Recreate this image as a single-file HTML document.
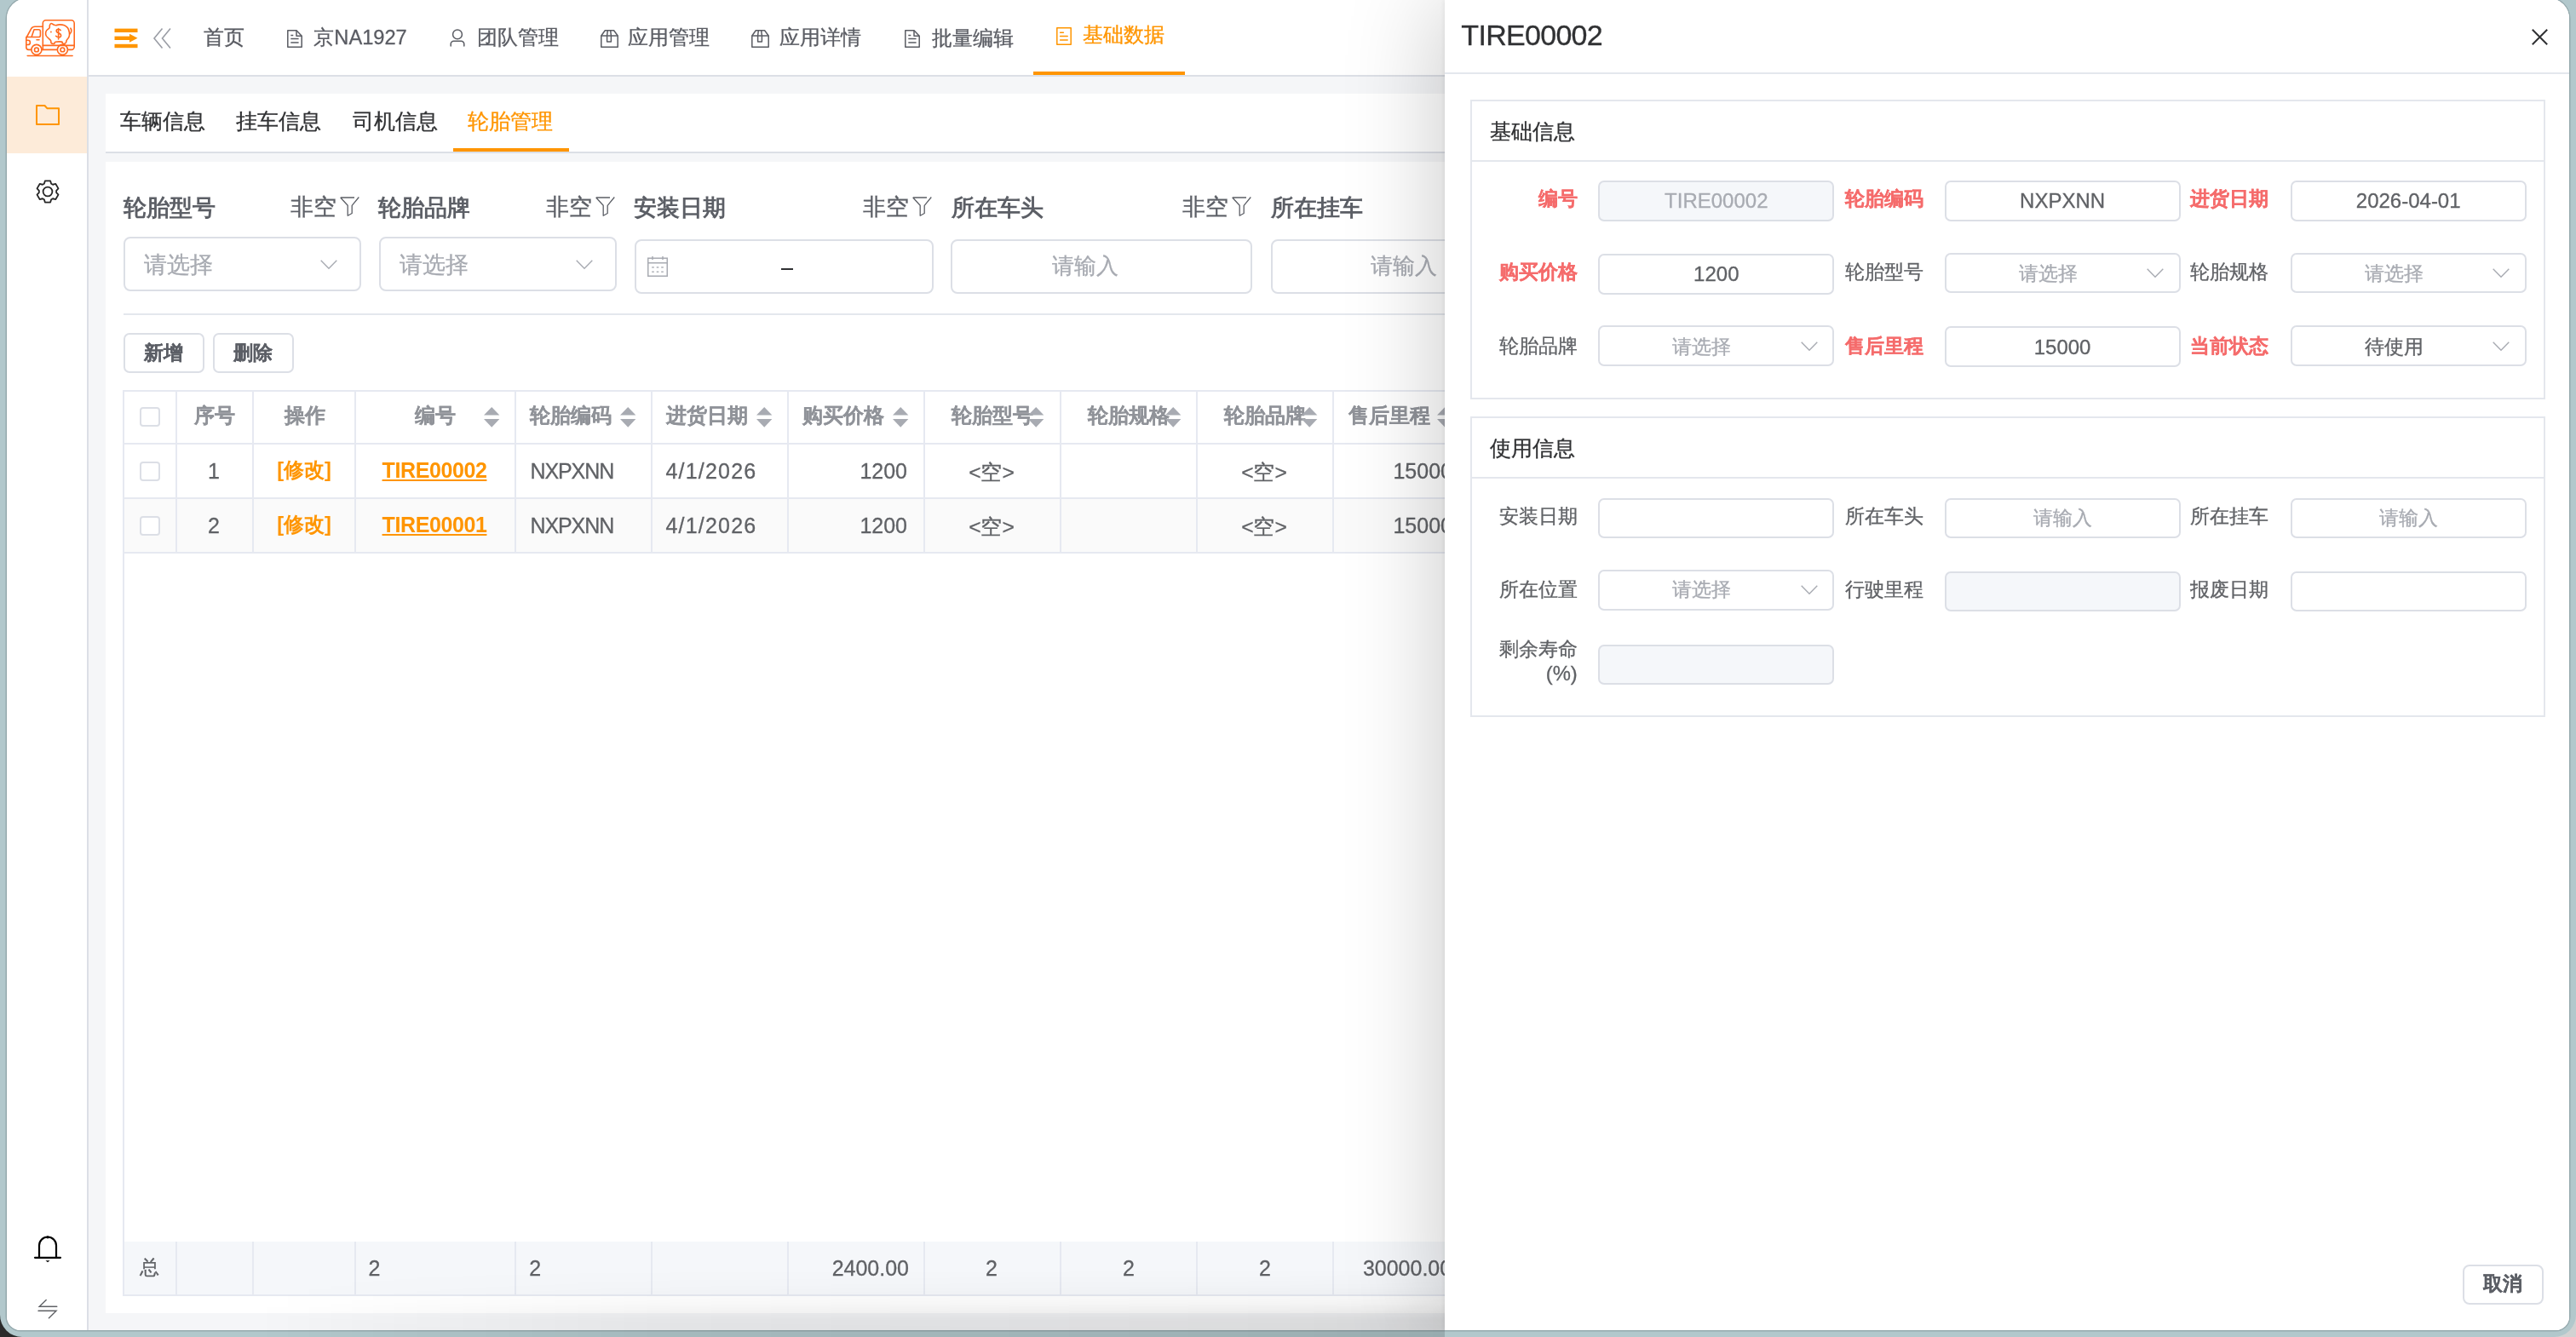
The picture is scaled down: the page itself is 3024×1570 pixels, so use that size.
<!DOCTYPE html><html><head><meta charset="utf-8"><style>
html,body{margin:0;padding:0;width:3024px;height:1570px;overflow:hidden;font-family:'Liberation Sans', sans-serif;}
body{background:linear-gradient(to right,#2b2b2b 0,#2b2b2b 50%,#d2d2d2 50%);}
#frame{position:absolute;left:0;top:0;width:3024px;height:1570px;background:#b2c8cc;border-radius:0 0 26px 26px;}
.t{position:absolute;white-space:nowrap;-webkit-text-stroke:0.3px;}
.b{-webkit-text-stroke:0 !important;}
.b2{-webkit-text-stroke:0.2px !important;}
#win{position:absolute;left:8px;top:-2px;width:3008px;height:1564px;background:#fff;border-radius:24px 24px 16px 16px;overflow:hidden;box-shadow:0 0 0 1.5px #95a9ad;}
#root{position:absolute;left:-8px;top:2px;width:3024px;height:1570px;will-change:transform;}
</style></head><body>
<div id="frame"></div><div id="win"><div id="root">
<div style="position:absolute;left:8px;top:0px;width:94px;height:1562px;background:#fff;"></div>
<div style="position:absolute;left:102px;top:0px;width:2px;height:1562px;background:#dcdfe6;"></div>
<div style="position:absolute;left:8px;top:90px;width:94px;height:90px;background:#fdebd9;"></div>
<svg style="position:absolute;left:25px;top:18px;overflow:visible" width="70" height="52" viewBox="0 0 70 52"><g fill="none" stroke="#ff6a1f" stroke-width="1.6" stroke-linecap="round" stroke-linejoin="round">
<path d="M25.3 40.4 V9.3 a3.5 3.5 0 0 1 3.5 -3.5 H58.7 a3.5 3.5 0 0 1 3.5 3.5 V37 a3.4 3.4 0 0 1 -3.4 3.4 H54.8"/>
<path d="M25.3 35.4 H62.2"/>
<path d="M42 40.4 H24.3 M11.5 40.4 H8.6 a2.8 2.8 0 0 1 -2.8 -2.8 V26.5 L11.7 15.6 Q13 13.2 16 13.2 H25.3"/>
<path d="M12 25.5 L15 16.7 H20.3 a2.1 2.1 0 0 1 2.1 2.1 V23.4 a2.1 2.1 0 0 1 -2.1 2.1 Z M5.8 25.5 H12"/>
<path d="M5.8 29.3 H7.8 a2.6 2.6 0 0 1 0 5.2 H5.8"/>
<path d="M18 28.8 H21"/>
<circle cx="17.9" cy="40.4" r="6"/><circle cx="17.9" cy="40.4" r="2.4"/>
<circle cx="48.4" cy="40.4" r="6"/><circle cx="48.4" cy="40.4" r="2.4"/>
<path d="M7.2 47.5 H60.1"/>
<path d="M33.40 11.70 C33.73 10.82 34.15 9.57 35.00 9.50 C35.85 9.43 37.53 10.93 38.50 11.30 C39.47 11.67 39.77 11.77 40.80 11.70 C41.83 11.63 43.07 10.90 44.70 10.90 C46.33 10.90 48.97 11.05 50.60 11.70 C52.23 12.35 53.53 13.38 54.50 14.80 C55.47 16.22 56.15 18.45 56.40 20.20 C56.65 21.95 56.52 23.80 56.00 25.30 C55.48 26.80 53.88 28.10 53.30 29.20 C52.72 30.30 52.95 31.20 52.50 31.90 C52.05 32.60 51.32 33.27 50.60 33.40 C49.88 33.53 48.72 33.08 48.20 32.70 C47.68 32.32 48.87 31.33 47.50 31.10 C46.13 30.87 41.43 30.98 40.00 31.30 C38.57 31.62 39.40 32.65 38.90 33.00 C38.40 33.35 37.65 33.52 37.00 33.40 C36.35 33.28 35.40 32.93 35.00 32.30 C34.60 31.67 35.18 30.57 34.60 29.60 C34.02 28.63 32.40 27.43 31.50 26.50 C30.60 25.57 29.68 24.92 29.20 24.00 C28.72 23.08 28.53 22.02 28.60 21.00 C28.67 19.98 28.87 18.93 29.60 17.90 C30.33 16.87 32.37 15.83 33.00 14.80 C33.63 13.77 33.07 12.58 33.40 11.70 Z"/>
<path d="M57.9 15.2 q2.2 3.2 -0.9 6.6"/>
<path d="M46.2 17.6 q-0.8 -1.4 -2.6 -1.4 q-2.4 0 -2.4 2 q0 1.8 2.6 2.6 q2.8 0.9 2.8 2.9 q0 2 -2.6 2 q-2 0 -3.4 -1.4 M43.6 15.6 V28"/>
</g><circle cx="34.9" cy="19.5" r="0.9" fill="#ff6a1f"/></svg>
<svg style="position:absolute;left:42px;top:123px;overflow:visible" width="28" height="24" viewBox="0 0 28 24"><path d="M1 1 H10.5 L13.5 4.3 H27 V23 H1 Z" fill="none" stroke="#ff9500" stroke-width="2" stroke-linejoin="round"/></svg>
<svg style="position:absolute;left:42px;top:211px;overflow:visible" width="28" height="28" viewBox="0 0 28 28"><path d="M9.85 4.68 L10.86 1.39 L17.14 1.39 L18.15 4.68 L20.00 5.75 L23.35 4.97 L26.50 10.42 L24.14 12.93 L24.14 15.07 L26.50 17.58 L23.35 23.03 L20.00 22.25 L18.15 23.32 L17.14 26.61 L10.86 26.61 L9.85 23.32 L8.00 22.25 L4.65 23.03 L1.50 17.58 L3.86 15.07 L3.86 12.93 L1.50 10.42 L4.65 4.97 L8.00 5.75 Z" fill="none" stroke="#262626" stroke-width="1.8" stroke-linejoin="round"/><circle cx="14" cy="14" r="5.4" fill="none" stroke="#262626" stroke-width="1.8"/></svg>
<svg style="position:absolute;left:40px;top:1451px;overflow:visible" width="32" height="32" viewBox="0 0 32 32"><g fill="none" stroke="#000" stroke-width="2.2" stroke-linecap="round"><path d="M6 25.8 V11.5 a10 10 0 0 1 20 0 V25.8"/><path d="M1 25.8 H31"/></g><path d="M13.5 29.2 H18.5 L16 31.2 Z" fill="#000"/><circle cx="16" cy="1.8" r="1.6" fill="#000"/></svg>
<svg style="position:absolute;left:44px;top:1526px;overflow:visible" width="24" height="22" viewBox="0 0 24 22"><g fill="none" stroke="#606266" stroke-width="1.4" stroke-linecap="round"><path d="M10.2 0.5 L2.2 8.3 H22.8"/><path d="M1 13.2 H22 L13.4 21.7"/></g></svg>
<div style="position:absolute;left:104px;top:0px;width:2912px;height:88px;background:#fff;"></div>
<div style="position:absolute;left:104px;top:88px;width:2912px;height:2px;background:#dcdfe6;"></div>
<div style="position:absolute;left:104px;top:90px;width:2912px;height:1472px;background:#f5f6f8;"></div>
<svg style="position:absolute;left:134px;top:33px;overflow:visible" width="28" height="24" viewBox="0 0 28 24"><g fill="#ff9500"><rect x="0.5" y="0.6" width="27" height="4.4"/><rect x="0.5" y="9.6" width="17.5" height="4.4"/><path d="M18 6.8 L27.5 11.8 L18 16.8 Z"/><rect x="0.5" y="18.8" width="27" height="4.4"/></g></svg>
<svg style="position:absolute;left:180px;top:33px;overflow:visible" width="21" height="24" viewBox="0 0 21 24"><g fill="none" stroke="#9a9da5" stroke-width="1.6"><path d="M10.5 0.5 L1 12 L10.5 23.5"/><path d="M20 0.5 L10.5 12 L20 23.5"/></g></svg>
<div class="t" style="left:239.06px;top:33.37px;font-size:23.64px;line-height:23.64px;color:#5a5c63;">首页</div>
<svg style="position:absolute;left:337px;top:34.5px;overflow:visible" width="18" height="21" viewBox="0 0 18 21"><g fill="none" stroke="#5a5c63" stroke-width="1.5" stroke-linejoin="round"><path d="M0.8 0.8 H11 L17.2 7.2 V20.2 H0.8 Z"/><path d="M11 0.8 V7.2 H17.2"/><path d="M4.3 6.4 H7.3 M4.3 10.6 H13.6 M4.3 15 H13.6"/></g></svg>
<div class="t" style="left:368.36px;top:33.37px;font-size:23.64px;line-height:23.64px;color:#5a5c63;">京NA1927</div>
<svg style="position:absolute;left:528px;top:34px;overflow:visible" width="18" height="21" viewBox="0 0 18 21"><g fill="none" stroke="#5a5c63" stroke-width="1.5" stroke-linecap="round"><circle cx="9" cy="6.4" r="5.4"/><path d="M1.2 20 V17.8 a3.5 3.5 0 0 1 3.5 -3.5 H13.3 a3.5 3.5 0 0 1 3.5 3.5 V20"/></g></svg>
<div class="t" style="left:560.36px;top:33.37px;font-size:23.64px;line-height:23.64px;color:#5a5c63;">团队管理</div>
<svg style="position:absolute;left:704.5px;top:34.5px;overflow:visible" width="21" height="21" viewBox="0 0 21 21"><g fill="none" stroke="#5a5c63" stroke-width="1.5" stroke-linejoin="round"><path d="M0.8 7 L5.3 0.8 H15.6 L20.2 7 V20.2 H0.8 Z"/><path d="M0.8 7 H20.2"/><path d="M8.3 0.8 L7.6 7 V14 H12.4 V7 L11.7 0.8"/></g></svg>
<div class="t" style="left:737.36px;top:33.37px;font-size:23.64px;line-height:23.64px;color:#5a5c63;">应用管理</div>
<svg style="position:absolute;left:882px;top:34.5px;overflow:visible" width="21" height="21" viewBox="0 0 21 21"><g fill="none" stroke="#5a5c63" stroke-width="1.5" stroke-linejoin="round"><path d="M0.8 7 L5.3 0.8 H15.6 L20.2 7 V20.2 H0.8 Z"/><path d="M0.8 7 H20.2"/><path d="M8.3 0.8 L7.6 7 V14 H12.4 V7 L11.7 0.8"/></g></svg>
<div class="t" style="left:915.26px;top:33.37px;font-size:23.64px;line-height:23.64px;color:#5a5c63;">应用详情</div>
<svg style="position:absolute;left:1062px;top:34.5px;overflow:visible" width="18" height="21" viewBox="0 0 18 21"><g fill="none" stroke="#5a5c63" stroke-width="1.5" stroke-linejoin="round"><path d="M0.8 0.8 H11 L17.2 7.2 V20.2 H0.8 Z"/><path d="M11 0.8 V7.2 H17.2"/><path d="M4.3 6.4 H7.3 M4.3 10.6 H13.6 M4.3 15 H13.6"/></g></svg>
<div class="t" style="left:1093.76px;top:33.67px;font-size:23.64px;line-height:23.64px;color:#5a5c63;">批量编辑</div>
<svg style="position:absolute;left:1240px;top:32px;overflow:visible" width="18" height="21" viewBox="0 0 18 21"><g fill="none" stroke="#ff9500" stroke-width="1.5" stroke-linejoin="round"><path d="M0.8 0.8 H17.2 V20.2 H0.8 Z"/><path d="M4.6 6.2 H8.4 M4.6 10.6 H13.2 M4.6 15 H13.2" stroke-linecap="round"/></g></svg>
<div class="t" style="left:1271.46px;top:30.37px;font-size:23.64px;line-height:23.64px;color:#ff9500;">基础数据</div>
<div style="position:absolute;left:1213px;top:84px;width:178px;height:4px;background:#ff9500;"></div>
<div style="position:absolute;left:124px;top:110px;width:2872px;height:70px;background:#fff;"></div>
<div style="position:absolute;left:124px;top:178px;width:2872px;height:2px;background:#dcdfe6;"></div>
<div class="t" style="left:141.15px;top:130.20px;font-size:25.22px;line-height:25.22px;color:#303133;">车辆信息</div>
<div class="t" style="left:276.75px;top:130.20px;font-size:25.22px;line-height:25.22px;color:#303133;">挂车信息</div>
<div class="t" style="left:413.65px;top:130.20px;font-size:25.22px;line-height:25.22px;color:#303133;">司机信息</div>
<div class="t" style="left:548.75px;top:130.20px;font-size:25.22px;line-height:25.22px;color:#ff9500;">轮胎管理</div>
<div style="position:absolute;left:532px;top:174px;width:136px;height:4px;background:#ff9500;"></div>
<div style="position:absolute;left:124px;top:190px;width:2872px;height:1352px;background:#fff;"></div>
<div class="t b" style="left:144.53px;top:229.53px;font-size:27.09px;line-height:27.09px;color:#5c5f66;font-weight:bold;">轮胎型号</div>
<div class="t" style="left:340.73px;top:228.53px;font-size:27.09px;line-height:27.09px;color:#5c5f66;">非空</div>
<svg style="position:absolute;left:398.7px;top:231.3px;overflow:visible" width="23" height="23" viewBox="0 0 23 23"><path d="M0.7 1 H17 M22.3 0.5 L14.2 10.3 V19.5 L9.2 22.2 V10.3 L0.7 1" fill="none" stroke="#5c5f66" stroke-width="1.3" stroke-linejoin="round"/></svg>
<div class="t b" style="left:444.23px;top:229.53px;font-size:27.09px;line-height:27.09px;color:#5c5f66;font-weight:bold;">轮胎品牌</div>
<div class="t" style="left:640.73px;top:228.53px;font-size:27.09px;line-height:27.09px;color:#5c5f66;">非空</div>
<svg style="position:absolute;left:698.7px;top:231.3px;overflow:visible" width="23" height="23" viewBox="0 0 23 23"><path d="M0.7 1 H17 M22.3 0.5 L14.2 10.3 V19.5 L9.2 22.2 V10.3 L0.7 1" fill="none" stroke="#5c5f66" stroke-width="1.3" stroke-linejoin="round"/></svg>
<div class="t b" style="left:744.23px;top:229.53px;font-size:27.09px;line-height:27.09px;color:#5c5f66;font-weight:bold;">安装日期</div>
<div class="t" style="left:1012.73px;top:228.53px;font-size:27.09px;line-height:27.09px;color:#5c5f66;">非空</div>
<svg style="position:absolute;left:1070.7px;top:231.3px;overflow:visible" width="23" height="23" viewBox="0 0 23 23"><path d="M0.7 1 H17 M22.3 0.5 L14.2 10.3 V19.5 L9.2 22.2 V10.3 L0.7 1" fill="none" stroke="#5c5f66" stroke-width="1.3" stroke-linejoin="round"/></svg>
<div class="t b" style="left:1116.73px;top:229.53px;font-size:27.09px;line-height:27.09px;color:#5c5f66;font-weight:bold;">所在车头</div>
<div class="t" style="left:1387.53px;top:228.53px;font-size:27.09px;line-height:27.09px;color:#5c5f66;">非空</div>
<svg style="position:absolute;left:1445.5px;top:231.3px;overflow:visible" width="23" height="23" viewBox="0 0 23 23"><path d="M0.7 1 H17 M22.3 0.5 L14.2 10.3 V19.5 L9.2 22.2 V10.3 L0.7 1" fill="none" stroke="#5c5f66" stroke-width="1.3" stroke-linejoin="round"/></svg>
<div class="t b" style="left:1491.53px;top:229.53px;font-size:27.09px;line-height:27.09px;color:#5c5f66;font-weight:bold;">所在挂车</div>
<div class="t" style="left:1761.73px;top:228.53px;font-size:27.09px;line-height:27.09px;color:#5c5f66;">非空</div>
<svg style="position:absolute;left:1819.7px;top:231.3px;overflow:visible" width="23" height="23" viewBox="0 0 23 23"><path d="M0.7 1 H17 M22.3 0.5 L14.2 10.3 V19.5 L9.2 22.2 V10.3 L0.7 1" fill="none" stroke="#5c5f66" stroke-width="1.3" stroke-linejoin="round"/></svg>
<div style="position:absolute;left:145px;top:278px;width:279px;height:64px;box-sizing:border-box;border:2px solid #dcdfe6;border-radius:8px;background:#fff;"></div>
<div class="t" style="left:169.43px;top:296.73px;font-size:27.09px;line-height:27.09px;color:#a8abb2;">请选择</div>
<svg style="position:absolute;left:376px;top:305px;overflow:visible" width="20" height="11" viewBox="0 0 20 11"><path d="M0.7 0.7 L10 10.3 L19.3 0.7" fill="none" stroke="#a8abb2" stroke-width="1.4"/></svg>
<div style="position:absolute;left:444.5px;top:278px;width:279px;height:64px;box-sizing:border-box;border:2px solid #dcdfe6;border-radius:8px;background:#fff;"></div>
<div class="t" style="left:468.93px;top:296.73px;font-size:27.09px;line-height:27.09px;color:#a8abb2;">请选择</div>
<svg style="position:absolute;left:675.5px;top:305px;overflow:visible" width="20" height="11" viewBox="0 0 20 11"><path d="M0.7 0.7 L10 10.3 L19.3 0.7" fill="none" stroke="#a8abb2" stroke-width="1.4"/></svg>
<div style="position:absolute;left:744.5px;top:281px;width:351px;height:63.5px;box-sizing:border-box;border:2px solid #dcdfe6;border-radius:8px;background:#fff;"></div>
<svg style="position:absolute;left:760px;top:301px;overflow:visible" width="24" height="24" viewBox="0 0 24 24"><g fill="none" stroke="#a8abb2" stroke-width="1.5"><rect x="0.75" y="2.2" width="22.5" height="21"/><path d="M0.75 7.7 H23.25 M6 0 V4 M18 0 V4"/></g><g fill="#a8abb2"><rect x="5.2" y="12.2" width="2.6" height="1.4"/><rect x="10.7" y="12.2" width="2.6" height="1.4"/><rect x="16.2" y="12.2" width="2.6" height="1.4"/><rect x="5.2" y="17.5" width="2.6" height="1.4"/><rect x="10.7" y="17.5" width="2.6" height="1.4"/><rect x="16.2" y="17.5" width="2.6" height="1.4"/></g></svg>
<div style="position:absolute;left:917px;top:314.5px;width:14px;height:2.2px;background:#303133;"></div>
<div style="position:absolute;left:1116.4px;top:281px;width:354px;height:63.5px;box-sizing:border-box;border:2px solid #dcdfe6;border-radius:8px;background:#fff;"></div>
<div class="t" style="left:1124.00px;width:300px;text-align:center;top:300.49px;font-size:25.61px;line-height:25.61px;color:#a8abb2;">请输入</div>
<div style="position:absolute;left:1492px;top:281px;width:354px;height:63.5px;box-sizing:border-box;border:2px solid #dcdfe6;border-radius:8px;background:#fff;"></div>
<div class="t" style="left:1498.00px;width:300px;text-align:center;top:300.49px;font-size:25.61px;line-height:25.61px;color:#a8abb2;">请输入</div>
<div style="position:absolute;left:145px;top:368px;width:2830px;height:2px;background:#e4e7ed;"></div>
<div style="position:absolute;left:145px;top:391px;width:95px;height:47px;box-sizing:border-box;border:2px solid #dcdfe6;border-radius:7px;background:#fff;"></div>
<div class="t b2" style="left:168.57px;top:402.59px;font-size:23.15px;line-height:23.15px;color:#5c5f66;font-weight:bold;">新增</div>
<div style="position:absolute;left:250.4px;top:391px;width:95px;height:47px;box-sizing:border-box;border:2px solid #dcdfe6;border-radius:7px;background:#fff;"></div>
<div class="t b2" style="left:273.97px;top:402.59px;font-size:23.15px;line-height:23.15px;color:#5c5f66;font-weight:bold;">删除</div>
<div style="position:absolute;left:144px;top:458px;width:2830px;height:2px;background:#e6e9f1;"></div>
<div style="position:absolute;left:144px;top:458px;width:2px;height:1064px;background:#e6e9f1;"></div>
<div style="position:absolute;left:144px;top:520px;width:2830px;height:2px;background:#e6e9f1;"></div>
<div style="position:absolute;left:146px;top:586px;width:2828px;height:62px;background:#fafafa;"></div>
<div style="position:absolute;left:144px;top:584px;width:2830px;height:2px;background:#e6e9f1;"></div>
<div style="position:absolute;left:144px;top:648px;width:2830px;height:2px;background:#e6e9f1;"></div>
<div style="position:absolute;left:146px;top:1458px;width:2828px;height:62px;background:#f5f7fa;"></div>
<div style="position:absolute;left:144px;top:1520px;width:2830px;height:2px;background:#e6e9f1;"></div>
<div style="position:absolute;left:206px;top:458px;width:2px;height:192px;background:#e6e9f1;"></div>
<div style="position:absolute;left:206px;top:1458px;width:2px;height:64px;background:#e6e9f1;"></div>
<div style="position:absolute;left:296px;top:458px;width:2px;height:192px;background:#e6e9f1;"></div>
<div style="position:absolute;left:296px;top:1458px;width:2px;height:64px;background:#e6e9f1;"></div>
<div style="position:absolute;left:416px;top:458px;width:2px;height:192px;background:#e6e9f1;"></div>
<div style="position:absolute;left:416px;top:1458px;width:2px;height:64px;background:#e6e9f1;"></div>
<div style="position:absolute;left:604px;top:458px;width:2px;height:192px;background:#e6e9f1;"></div>
<div style="position:absolute;left:604px;top:1458px;width:2px;height:64px;background:#e6e9f1;"></div>
<div style="position:absolute;left:764px;top:458px;width:2px;height:192px;background:#e6e9f1;"></div>
<div style="position:absolute;left:764px;top:1458px;width:2px;height:64px;background:#e6e9f1;"></div>
<div style="position:absolute;left:924px;top:458px;width:2px;height:192px;background:#e6e9f1;"></div>
<div style="position:absolute;left:924px;top:1458px;width:2px;height:64px;background:#e6e9f1;"></div>
<div style="position:absolute;left:1084px;top:458px;width:2px;height:192px;background:#e6e9f1;"></div>
<div style="position:absolute;left:1084px;top:1458px;width:2px;height:64px;background:#e6e9f1;"></div>
<div style="position:absolute;left:1244px;top:458px;width:2px;height:192px;background:#e6e9f1;"></div>
<div style="position:absolute;left:1244px;top:1458px;width:2px;height:64px;background:#e6e9f1;"></div>
<div style="position:absolute;left:1404px;top:458px;width:2px;height:192px;background:#e6e9f1;"></div>
<div style="position:absolute;left:1404px;top:1458px;width:2px;height:64px;background:#e6e9f1;"></div>
<div style="position:absolute;left:1564px;top:458px;width:2px;height:192px;background:#e6e9f1;"></div>
<div style="position:absolute;left:1564px;top:1458px;width:2px;height:64px;background:#e6e9f1;"></div>
<div style="position:absolute;left:1724px;top:458px;width:2px;height:192px;background:#e6e9f1;"></div>
<div style="position:absolute;left:1724px;top:1458px;width:2px;height:64px;background:#e6e9f1;"></div>
<div style="position:absolute;left:1884px;top:458px;width:2px;height:192px;background:#e6e9f1;"></div>
<div style="position:absolute;left:1884px;top:1458px;width:2px;height:64px;background:#e6e9f1;"></div>
<div style="position:absolute;left:164px;top:477.5px;width:23.5px;height:23.5px;box-sizing:border-box;border:2px solid #dcdfe6;border-radius:4px;background:#fff;"></div>
<div style="position:absolute;left:164px;top:541.5px;width:23.5px;height:23.5px;box-sizing:border-box;border:2px solid #dcdfe6;border-radius:4px;background:#fff;"></div>
<div style="position:absolute;left:164px;top:605.5px;width:23.5px;height:23.5px;box-sizing:border-box;border:2px solid #dcdfe6;border-radius:4px;background:#fff;"></div>
<div class="t b2" style="left:228.46px;top:477.37px;font-size:23.64px;line-height:23.64px;color:#909399;font-weight:bold;">序号</div>
<div class="t b2" style="left:333.76px;top:477.37px;font-size:23.64px;line-height:23.64px;color:#909399;font-weight:bold;">操作</div>
<div class="t b2" style="left:486.76px;top:477.37px;font-size:23.64px;line-height:23.64px;color:#909399;font-weight:bold;">编号</div>
<div class="t b2" style="left:621.76px;top:477.37px;font-size:23.64px;line-height:23.64px;color:#909399;font-weight:bold;">轮胎编码</div>
<div class="t b2" style="left:781.76px;top:477.37px;font-size:23.64px;line-height:23.64px;color:#909399;font-weight:bold;">进货日期</div>
<div class="t b2" style="left:942.26px;top:477.37px;font-size:23.64px;line-height:23.64px;color:#909399;font-weight:bold;">购买价格</div>
<div class="t b2" style="left:1117.16px;top:477.37px;font-size:23.64px;line-height:23.64px;color:#909399;font-weight:bold;">轮胎型号</div>
<div class="t b2" style="left:1277.06px;top:477.37px;font-size:23.64px;line-height:23.64px;color:#909399;font-weight:bold;">轮胎规格</div>
<div class="t b2" style="left:1436.76px;top:477.37px;font-size:23.64px;line-height:23.64px;color:#909399;font-weight:bold;">轮胎品牌</div>
<div class="t b2" style="left:1582.76px;top:477.37px;font-size:23.64px;line-height:23.64px;color:#909399;font-weight:bold;">售后里程</div>
<svg style="position:absolute;left:567.5px;top:478.1px;overflow:visible" width="19" height="24" viewBox="0 0 19 24"><g fill="#a8abb2"><path d="M0 9.5 L9.2 0 L18.4 9.5 Z"/><path d="M0 14 L9.2 23.7 L18.4 14 Z"/></g></svg>
<svg style="position:absolute;left:727.5px;top:478.1px;overflow:visible" width="19" height="24" viewBox="0 0 19 24"><g fill="#a8abb2"><path d="M0 9.5 L9.2 0 L18.4 9.5 Z"/><path d="M0 14 L9.2 23.7 L18.4 14 Z"/></g></svg>
<svg style="position:absolute;left:887.5px;top:478.1px;overflow:visible" width="19" height="24" viewBox="0 0 19 24"><g fill="#a8abb2"><path d="M0 9.5 L9.2 0 L18.4 9.5 Z"/><path d="M0 14 L9.2 23.7 L18.4 14 Z"/></g></svg>
<svg style="position:absolute;left:1047.5px;top:478.1px;overflow:visible" width="19" height="24" viewBox="0 0 19 24"><g fill="#a8abb2"><path d="M0 9.5 L9.2 0 L18.4 9.5 Z"/><path d="M0 14 L9.2 23.7 L18.4 14 Z"/></g></svg>
<svg style="position:absolute;left:1207.2px;top:478.1px;overflow:visible" width="19" height="24" viewBox="0 0 19 24"><g fill="#a8abb2"><path d="M0 9.5 L9.2 0 L18.4 9.5 Z"/><path d="M0 14 L9.2 23.7 L18.4 14 Z"/></g></svg>
<svg style="position:absolute;left:1367.5px;top:478.1px;overflow:visible" width="19" height="24" viewBox="0 0 19 24"><g fill="#a8abb2"><path d="M0 9.5 L9.2 0 L18.4 9.5 Z"/><path d="M0 14 L9.2 23.7 L18.4 14 Z"/></g></svg>
<svg style="position:absolute;left:1527.5px;top:478.1px;overflow:visible" width="19" height="24" viewBox="0 0 19 24"><g fill="#a8abb2"><path d="M0 9.5 L9.2 0 L18.4 9.5 Z"/><path d="M0 14 L9.2 23.7 L18.4 14 Z"/></g></svg>
<svg style="position:absolute;left:1686.5px;top:478.1px;overflow:visible" width="19" height="24" viewBox="0 0 19 24"><g fill="#a8abb2"><path d="M0 9.5 L9.2 0 L18.4 9.5 Z"/><path d="M0 14 L9.2 23.7 L18.4 14 Z"/></g></svg>
<div class="t" style="left:101.00px;width:300px;text-align:center;top:540.89px;font-size:25px;line-height:25px;color:#606266;">1</div>
<div class="t b2" style="left:207.00px;width:300px;text-align:center;top:540.67px;font-size:23.64px;line-height:23.64px;color:#ff9500;font-weight:bold;-webkit-text-stroke:0 !important;">[修改]</div>
<div class="t b" style="left:360.00px;width:300px;text-align:center;top:540.39px;font-size:25px;line-height:25px;color:#ff9500;font-weight:bold;text-decoration:underline;text-underline-offset:2px;text-decoration-thickness:2px;letter-spacing:-0.4px;-webkit-text-stroke:0 !important;">TIRE00002</div>
<div class="t" style="left:622.50px;top:540.89px;font-size:25px;line-height:25px;color:#606266;letter-spacing:-1.1px;">NXPXNN</div>
<div class="t" style="left:781.50px;top:540.89px;font-size:25px;line-height:25px;color:#606266;letter-spacing:1.2px;">4/1/2026</div>
<div class="t" style="left:865.00px;width:200px;text-align:right;top:540.89px;font-size:25px;line-height:25px;color:#606266;">1200</div>
<div class="t" style="left:1014.00px;width:300px;text-align:center;top:542.63px;font-size:24.62px;line-height:24.62px;color:#606266;">&lt;空&gt;</div>
<div class="t" style="left:1334.00px;width:300px;text-align:center;top:542.63px;font-size:24.62px;line-height:24.62px;color:#606266;">&lt;空&gt;</div>
<div class="t" style="left:1505.00px;width:200px;text-align:right;top:540.89px;font-size:25px;line-height:25px;color:#606266;">15000</div>
<div class="t" style="left:101.00px;width:300px;text-align:center;top:604.89px;font-size:25px;line-height:25px;color:#606266;">2</div>
<div class="t b2" style="left:207.00px;width:300px;text-align:center;top:604.67px;font-size:23.64px;line-height:23.64px;color:#ff9500;font-weight:bold;-webkit-text-stroke:0 !important;">[修改]</div>
<div class="t b" style="left:360.00px;width:300px;text-align:center;top:604.39px;font-size:25px;line-height:25px;color:#ff9500;font-weight:bold;text-decoration:underline;text-underline-offset:2px;text-decoration-thickness:2px;letter-spacing:-0.4px;-webkit-text-stroke:0 !important;">TIRE00001</div>
<div class="t" style="left:622.50px;top:604.89px;font-size:25px;line-height:25px;color:#606266;letter-spacing:-1.1px;">NXPXNN</div>
<div class="t" style="left:781.50px;top:604.89px;font-size:25px;line-height:25px;color:#606266;letter-spacing:1.2px;">4/1/2026</div>
<div class="t" style="left:865.00px;width:200px;text-align:right;top:604.89px;font-size:25px;line-height:25px;color:#606266;">1200</div>
<div class="t" style="left:1014.00px;width:300px;text-align:center;top:606.63px;font-size:24.62px;line-height:24.62px;color:#606266;">&lt;空&gt;</div>
<div class="t" style="left:1334.00px;width:300px;text-align:center;top:606.63px;font-size:24.62px;line-height:24.62px;color:#606266;">&lt;空&gt;</div>
<div class="t" style="left:1505.00px;width:200px;text-align:right;top:604.89px;font-size:25px;line-height:25px;color:#606266;">15000</div>
<div class="t" style="left:163.57px;top:1476.89px;font-size:23.15px;line-height:23.15px;color:#606266;">总</div>
<div class="t" style="left:432.50px;top:1476.59px;font-size:25px;line-height:25px;color:#606266;">2</div>
<div class="t" style="left:621.30px;top:1476.59px;font-size:25px;line-height:25px;color:#606266;">2</div>
<div class="t" style="left:867.00px;width:200px;text-align:right;top:1476.59px;font-size:25px;line-height:25px;color:#606266;">2400.00</div>
<div class="t" style="left:1014.00px;width:300px;text-align:center;top:1476.59px;font-size:25px;line-height:25px;color:#606266;">2</div>
<div class="t" style="left:1175.00px;width:300px;text-align:center;top:1476.59px;font-size:25px;line-height:25px;color:#606266;">2</div>
<div class="t" style="left:1335.00px;width:300px;text-align:center;top:1476.59px;font-size:25px;line-height:25px;color:#606266;">2</div>
<div class="t" style="left:1599.90px;top:1476.59px;font-size:25px;line-height:25px;color:#606266;">30000.00</div>
<div style="position:absolute;left:1696px;top:0px;width:1320px;height:1562px;background:#fff;box-shadow:-2px 0 5px rgba(0,0,0,0.05), -12px 0 100px rgba(0,0,0,0.19);"></div>
<div class="t" style="left:1715.32px;top:23.98px;font-size:34px;line-height:34px;color:#303133;letter-spacing:-0.7px;">TIRE00002</div>
<svg style="position:absolute;left:2972px;top:34px;overflow:visible" width="19" height="19" viewBox="0 0 19 19"><path d="M0.8 0.8 L18.2 18.2 M18.2 0.8 L0.8 18.2" stroke="#303133" stroke-width="2" fill="none"/></svg>
<div style="position:absolute;left:1696px;top:85px;width:1320px;height:2px;background:#e4e7ed;"></div>
<div style="position:absolute;left:1726px;top:117px;width:1262px;height:352px;box-sizing:border-box;border:2px solid #e4e7ed;background:#fff;"></div>
<div style="position:absolute;left:1726px;top:188px;width:1262px;height:2px;background:#e4e7ed;"></div>
<div class="t" style="left:1749.05px;top:141.50px;font-size:25.41px;line-height:25.41px;color:#303133;">基础信息</div>
<div style="position:absolute;left:1726px;top:489px;width:1262px;height:353px;box-sizing:border-box;border:2px solid #e4e7ed;background:#fff;"></div>
<div style="position:absolute;left:1726px;top:560px;width:1262px;height:2px;background:#e4e7ed;"></div>
<div class="t" style="left:1749.05px;top:514.40px;font-size:25.41px;line-height:25.41px;color:#303133;">使用信息</div>
<div class="t b2" style="left:1651.80px;width:200px;text-align:right;top:222.27px;font-size:23.44px;line-height:23.44px;color:#f56c6c;font-weight:bold;">编号</div>
<div style="position:absolute;left:1876.2px;top:212.2px;width:277.2px;height:47.5px;box-sizing:border-box;border:2px solid #dcdfe6;border-radius:7px;background:#f5f7fa;"></div>
<div class="t" style="left:1864.80px;width:300px;text-align:center;top:224.24px;font-size:24px;line-height:24px;color:#a8abb2;">TIRE00002</div>
<div class="t b2" style="left:2057.80px;width:200px;text-align:right;top:222.27px;font-size:23.44px;line-height:23.44px;color:#f56c6c;font-weight:bold;">轮胎编码</div>
<div style="position:absolute;left:2282.5px;top:212.2px;width:277.2px;height:47.5px;box-sizing:border-box;border:2px solid #dcdfe6;border-radius:7px;background:#fff;"></div>
<div class="t" style="left:2271.10px;width:300px;text-align:center;top:224.24px;font-size:24px;line-height:24px;color:#606266;">NXPXNN</div>
<div class="t b2" style="left:2463.40px;width:200px;text-align:right;top:222.27px;font-size:23.44px;line-height:23.44px;color:#f56c6c;font-weight:bold;">进货日期</div>
<div style="position:absolute;left:2688.6px;top:212.2px;width:277.2px;height:47.5px;box-sizing:border-box;border:2px solid #dcdfe6;border-radius:7px;background:#fff;"></div>
<div class="t" style="left:2677.20px;width:300px;text-align:center;top:224.24px;font-size:24px;line-height:24px;color:#606266;">2026-04-01</div>
<div class="t b2" style="left:1651.80px;width:200px;text-align:right;top:308.47px;font-size:23.44px;line-height:23.44px;color:#f56c6c;font-weight:bold;">购买价格</div>
<div style="position:absolute;left:1876.2px;top:298.3px;width:277.2px;height:47.5px;box-sizing:border-box;border:2px solid #dcdfe6;border-radius:7px;background:#fff;"></div>
<div class="t" style="left:1864.80px;width:300px;text-align:center;top:309.84px;font-size:24px;line-height:24px;color:#606266;">1200</div>
<div class="t" style="left:2057.80px;width:200px;text-align:right;top:308.47px;font-size:23.44px;line-height:23.44px;color:#606266;">轮胎型号</div>
<div style="position:absolute;left:2282.5px;top:296.6px;width:277.2px;height:47.5px;box-sizing:border-box;border:2px solid #dcdfe6;border-radius:7px;background:#fff;"></div>
<div class="t" style="left:2254.10px;width:300px;text-align:center;top:309.88px;font-size:23.25px;line-height:23.25px;color:#a8abb2;">请选择</div>
<svg style="position:absolute;left:2520px;top:314.5px;overflow:visible" width="20" height="11" viewBox="0 0 20 11"><path d="M0.7 0.7 L10 10.3 L19.3 0.7" fill="none" stroke="#a8abb2" stroke-width="1.4"/></svg>
<div class="t" style="left:2463.40px;width:200px;text-align:right;top:308.47px;font-size:23.44px;line-height:23.44px;color:#606266;">轮胎规格</div>
<div style="position:absolute;left:2688.6px;top:296.6px;width:277.2px;height:47.5px;box-sizing:border-box;border:2px solid #dcdfe6;border-radius:7px;background:#fff;"></div>
<div class="t" style="left:2660.20px;width:300px;text-align:center;top:309.88px;font-size:23.25px;line-height:23.25px;color:#a8abb2;">请选择</div>
<svg style="position:absolute;left:2926px;top:314.5px;overflow:visible" width="20" height="11" viewBox="0 0 20 11"><path d="M0.7 0.7 L10 10.3 L19.3 0.7" fill="none" stroke="#a8abb2" stroke-width="1.4"/></svg>
<div class="t" style="left:1651.80px;width:200px;text-align:right;top:394.57px;font-size:23.44px;line-height:23.44px;color:#606266;">轮胎品牌</div>
<div style="position:absolute;left:1876.2px;top:382.2px;width:277.2px;height:47.5px;box-sizing:border-box;border:2px solid #dcdfe6;border-radius:7px;background:#fff;"></div>
<div class="t" style="left:1847.80px;width:300px;text-align:center;top:395.88px;font-size:23.25px;line-height:23.25px;color:#a8abb2;">请选择</div>
<svg style="position:absolute;left:2114px;top:401.3px;overflow:visible" width="20" height="11" viewBox="0 0 20 11"><path d="M0.7 0.7 L10 10.3 L19.3 0.7" fill="none" stroke="#a8abb2" stroke-width="1.4"/></svg>
<div class="t b2" style="left:2057.80px;width:200px;text-align:right;top:394.57px;font-size:23.44px;line-height:23.44px;color:#f56c6c;font-weight:bold;">售后里程</div>
<div style="position:absolute;left:2282.5px;top:383px;width:277.2px;height:47.5px;box-sizing:border-box;border:2px solid #dcdfe6;border-radius:7px;background:#fff;"></div>
<div class="t" style="left:2271.10px;width:300px;text-align:center;top:395.74px;font-size:24px;line-height:24px;color:#606266;">15000</div>
<div class="t b2" style="left:2463.40px;width:200px;text-align:right;top:394.57px;font-size:23.44px;line-height:23.44px;color:#f56c6c;font-weight:bold;">当前状态</div>
<div style="position:absolute;left:2688.6px;top:382.2px;width:277.2px;height:47.5px;box-sizing:border-box;border:2px solid #dcdfe6;border-radius:7px;background:#fff;"></div>
<div class="t" style="left:2660.20px;width:300px;text-align:center;top:395.88px;font-size:23.25px;line-height:23.25px;color:#606266;">待使用</div>
<svg style="position:absolute;left:2926px;top:401.3px;overflow:visible" width="20" height="11" viewBox="0 0 20 11"><path d="M0.7 0.7 L10 10.3 L19.3 0.7" fill="none" stroke="#a8abb2" stroke-width="1.4"/></svg>
<div class="t" style="left:1651.80px;width:200px;text-align:right;top:594.77px;font-size:23.44px;line-height:23.44px;color:#606266;">安装日期</div>
<div style="position:absolute;left:1876.2px;top:584.6px;width:277.2px;height:47.5px;box-sizing:border-box;border:2px solid #dcdfe6;border-radius:7px;background:#fff;"></div>
<div class="t" style="left:2057.80px;width:200px;text-align:right;top:595.27px;font-size:23.44px;line-height:23.44px;color:#606266;">所在车头</div>
<div style="position:absolute;left:2282.5px;top:584.5px;width:277.2px;height:47.5px;box-sizing:border-box;border:2px solid #dcdfe6;border-radius:7px;background:#fff;"></div>
<div class="t" style="left:2271.10px;width:300px;text-align:center;top:596.88px;font-size:23.34px;line-height:23.34px;color:#a8abb2;">请输入</div>
<div class="t" style="left:2463.40px;width:200px;text-align:right;top:595.27px;font-size:23.44px;line-height:23.44px;color:#606266;">所在挂车</div>
<div style="position:absolute;left:2688.6px;top:584.5px;width:277.2px;height:47.5px;box-sizing:border-box;border:2px solid #dcdfe6;border-radius:7px;background:#fff;"></div>
<div class="t" style="left:2677.20px;width:300px;text-align:center;top:596.88px;font-size:23.34px;line-height:23.34px;color:#a8abb2;">请输入</div>
<div class="t" style="left:1651.80px;width:200px;text-align:right;top:680.57px;font-size:23.44px;line-height:23.44px;color:#606266;">所在位置</div>
<div style="position:absolute;left:1876.2px;top:669px;width:277.2px;height:47.5px;box-sizing:border-box;border:2px solid #dcdfe6;border-radius:7px;background:#fff;"></div>
<div class="t" style="left:1847.80px;width:300px;text-align:center;top:680.58px;font-size:23.25px;line-height:23.25px;color:#a8abb2;">请选择</div>
<svg style="position:absolute;left:2114px;top:687px;overflow:visible" width="20" height="11" viewBox="0 0 20 11"><path d="M0.7 0.7 L10 10.3 L19.3 0.7" fill="none" stroke="#a8abb2" stroke-width="1.4"/></svg>
<div class="t" style="left:2057.80px;width:200px;text-align:right;top:681.07px;font-size:23.44px;line-height:23.44px;color:#606266;">行驶里程</div>
<div style="position:absolute;left:2282.5px;top:670.7px;width:277.2px;height:47.5px;box-sizing:border-box;border:2px solid #dcdfe6;border-radius:7px;background:#f5f7fa;"></div>
<div class="t" style="left:2463.40px;width:200px;text-align:right;top:681.07px;font-size:23.44px;line-height:23.44px;color:#606266;">报废日期</div>
<div style="position:absolute;left:2688.6px;top:670.7px;width:277.2px;height:47.5px;box-sizing:border-box;border:2px solid #dcdfe6;border-radius:7px;background:#fff;"></div>
<div class="t" style="left:1651.80px;width:200px;text-align:right;top:750.87px;font-size:23.44px;line-height:23.44px;color:#606266;">剩余寿命</div>
<div class="t" style="left:1651.80px;width:200px;text-align:right;top:779.48px;font-size:23.8px;line-height:23.8px;color:#606266;">(%)</div>
<div style="position:absolute;left:1876.2px;top:756.8px;width:277.2px;height:47.5px;box-sizing:border-box;border:2px solid #dcdfe6;border-radius:7px;background:#f5f7fa;"></div>
<div style="position:absolute;left:2890.6px;top:1484.7px;width:95px;height:47px;box-sizing:border-box;border:2px solid #dcdfe6;border-radius:8px;background:#fff;"></div>
<div class="t b2" style="left:2914.77px;top:1496.49px;font-size:23.05px;line-height:23.05px;color:#5c5f66;font-weight:bold;">取消</div>
</div></div>
<div style="position:absolute;left:104px;top:1490px;width:1592px;height:80px;background:linear-gradient(to right, rgba(0,0,0,0) 0px, rgba(0,0,0,0) 196px, rgba(0,0,0,0.025) 346px, rgba(0,0,0,0.075) 696px, rgba(0,0,0,0.115) 1396px, rgba(0,0,0,0.14) 1592px);-webkit-mask-image:linear-gradient(to bottom, rgba(0,0,0,0) 0px, rgba(0,0,0,0.12) 20px, rgba(0,0,0,0.35) 40px, rgba(0,0,0,0.9) 60px, #000 80px);"></div>
</body></html>
